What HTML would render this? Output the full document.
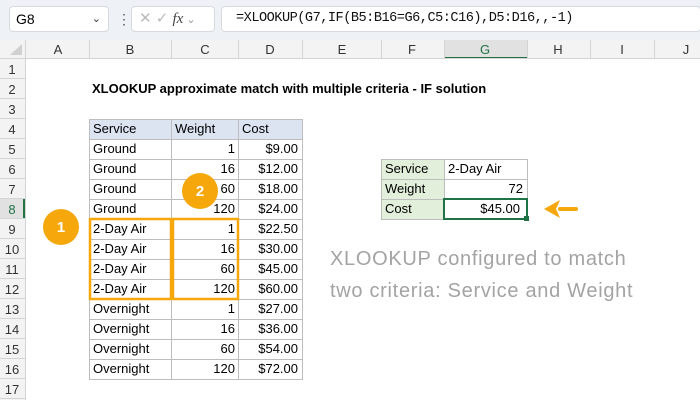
<!DOCTYPE html>
<html><head><style>
*{margin:0;padding:0;box-sizing:border-box}
body{width:700px;height:400px;overflow:hidden;background:#fff;font-family:"Liberation Sans",sans-serif;position:relative}
.a{position:absolute}
.c{position:absolute;font-size:13px;line-height:20px;height:20px;padding:0 4px;color:#000;white-space:nowrap}
.r{text-align:right}
</style></head><body>
<div class="a" style="left:0;top:0;width:700px;height:40px;background:#eef1f5"></div>
<div class="a" style="left:9px;top:6px;width:100px;height:26px;background:#fff;border:1px solid #d6d9dd;border-radius:4px;font-size:14px;line-height:24px;padding-left:6px">G8<span style="position:absolute;right:7px;top:0;font-size:11px;color:#333">&#8964;</span></div>
<div class="a" style="left:117px;top:12px;font-size:14px;color:#555;line-height:14px">&#8942;</div>
<div class="a" style="left:131px;top:6px;width:84px;height:26px;background:#fff;border:1px solid #d6d9dd;border-radius:4px;font-size:15px;line-height:24px;color:#bbb;padding-left:7px">✕ ✓ <i style="font-family:'Liberation Serif',serif;color:#444">fx</i><span style="font-size:11px;color:#999"> &#8964;</span></div>
<div class="a" style="left:221px;top:6px;width:480px;height:26px;background:#fff;border:1px solid #d6d9dd;border-radius:4px;font-family:'Liberation Mono',monospace;font-size:13.6px;line-height:24px;padding-left:14px;color:#111;letter-spacing:-0.5px">=XLOOKUP(G7,IF(B5:B16=G6,C5:C16),D5:D16,,-1)</div>
<svg class="a" style="left:0;top:40px" width="700" height="360">
<rect x="0" y="0" width="700" height="19" fill="#f3f3f3"/>
<rect x="0" y="0" width="25" height="360" fill="#f3f3f3"/>
<rect x="444" y="0" width="83" height="19" fill="#e1e1e1"/>
<rect x="444" y="17" width="83" height="2" fill="#217346"/>
<rect x="0" y="159" width="25" height="20" fill="#e1e1e1"/>
<rect x="23" y="159" width="2" height="20" fill="#217346"/>
<polygon points="10,15 22,15 22,4" fill="#d0d0d0"/>
<g stroke="#d4d4d4" stroke-width="1">
<line x1="0" y1="18.5" x2="700" y2="18.5"/><line x1="25.5" y1="0" x2="25.5" y2="360"/>
<line x1="89.5" y1="0" x2="89.5" y2="19"/><line x1="171.5" y1="0" x2="171.5" y2="19"/><line x1="238.5" y1="0" x2="238.5" y2="19"/><line x1="302.5" y1="0" x2="302.5" y2="19"/><line x1="381.5" y1="0" x2="381.5" y2="19"/><line x1="444.5" y1="0" x2="444.5" y2="19"/><line x1="527.5" y1="0" x2="527.5" y2="19"/><line x1="590.5" y1="0" x2="590.5" y2="19"/><line x1="654.5" y1="0" x2="654.5" y2="19"/>
<line x1="0" y1="38.5" x2="25" y2="38.5"/><line x1="0" y1="58.5" x2="25" y2="58.5"/><line x1="0" y1="78.5" x2="25" y2="78.5"/><line x1="0" y1="98.5" x2="25" y2="98.5"/><line x1="0" y1="118.5" x2="25" y2="118.5"/><line x1="0" y1="138.5" x2="25" y2="138.5"/><line x1="0" y1="158.5" x2="25" y2="158.5"/><line x1="0" y1="178.5" x2="25" y2="178.5"/><line x1="0" y1="198.5" x2="25" y2="198.5"/><line x1="0" y1="218.5" x2="25" y2="218.5"/><line x1="0" y1="238.5" x2="25" y2="238.5"/><line x1="0" y1="258.5" x2="25" y2="258.5"/><line x1="0" y1="278.5" x2="25" y2="278.5"/><line x1="0" y1="298.5" x2="25" y2="298.5"/><line x1="0" y1="318.5" x2="25" y2="318.5"/><line x1="0" y1="338.5" x2="25" y2="338.5"/><line x1="0" y1="358.5" x2="25" y2="358.5"/>
</g>
<g font-family="Liberation Sans" font-size="13" fill="#333" text-anchor="middle">
<text x="58" y="14">A</text><text x="130" y="14">B</text><text x="205" y="14">C</text><text x="270" y="14">D</text><text x="342" y="14">E</text><text x="412" y="14">F</text><text x="485" y="14" fill="#217346">G</text><text x="558" y="14">H</text><text x="622" y="14">I</text><text x="686" y="14">J</text>
<text x="12" y="34">1</text><text x="12" y="54">2</text><text x="12" y="74">3</text><text x="12" y="94">4</text><text x="12" y="114">5</text><text x="12" y="134">6</text><text x="12" y="154">7</text><text x="12" y="174" fill="#217346">8</text><text x="12" y="194">9</text><text x="12" y="214">10</text><text x="12" y="234">11</text><text x="12" y="254">12</text><text x="12" y="274">13</text><text x="12" y="294">14</text><text x="12" y="314">15</text><text x="12" y="334">16</text><text x="12" y="354">17</text>
</g>
<rect x="89" y="79" width="213" height="20" fill="#dce3f1"/>
<g stroke="#bdbdbd" stroke-width="1" fill="none">
<rect x="89.5" y="79.5" width="213" height="260"/>
<line x1="171.5" y1="79" x2="171.5" y2="339"/><line x1="238.5" y1="79" x2="238.5" y2="339"/>
<line x1="89" y1="99.5" x2="302" y2="99.5"/><line x1="89" y1="119.5" x2="302" y2="119.5"/><line x1="89" y1="139.5" x2="302" y2="139.5"/><line x1="89" y1="159.5" x2="302" y2="159.5"/><line x1="89" y1="179.5" x2="302" y2="179.5"/><line x1="89" y1="199.5" x2="302" y2="199.5"/><line x1="89" y1="219.5" x2="302" y2="219.5"/><line x1="89" y1="239.5" x2="302" y2="239.5"/><line x1="89" y1="259.5" x2="302" y2="259.5"/><line x1="89" y1="279.5" x2="302" y2="279.5"/><line x1="89" y1="299.5" x2="302" y2="299.5"/><line x1="89" y1="319.5" x2="302" y2="319.5"/>
</g>
<rect x="381" y="119" width="63" height="60" fill="#e2efda"/>
<g stroke="#bdbdbd" fill="none"><rect x="381.5" y="119.5" width="146" height="60"/><line x1="444.5" y1="119" x2="444.5" y2="179"/><line x1="381" y1="139.5" x2="527" y2="139.5"/><line x1="381" y1="159.5" x2="527" y2="159.5"/></g>
<rect x="444" y="159" width="83" height="20" fill="none" stroke="#217346" stroke-width="2"/>
<rect x="524" y="176" width="5" height="5" fill="#217346"/>
<g stroke="#f5a70c" stroke-width="2.5" fill="none"><rect x="90" y="179" width="81" height="80"/><rect x="173" y="179" width="65" height="80"/></g>
<circle cx="61" cy="187" r="18" fill="#f5a70c"/><circle cx="200" cy="151" r="18" fill="#f5a70c"/>
<g font-family="Liberation Sans" font-weight="bold" font-size="15" fill="#fff" text-anchor="middle"><text x="61" y="192">1</text><text x="200" y="156">2</text></g>
<path d="M560 169 H576" stroke="#f5a70c" stroke-width="4" stroke-linecap="round"/>
<polygon points="544,169 560,160 556,169 560,178" fill="#f5a70c"/>
</svg>
<div class="c" style="left:88px;top:79px;font-weight:bold">XLOOKUP approximate match with multiple criteria - IF solution</div>
<div class="c" style="left:89px;top:119px">Service</div><div class="c" style="left:171px;top:119px">Weight</div><div class="c" style="left:238px;top:119px">Cost</div>
<div class="c" style="left:89px;top:139px">Ground</div><div class="c r" style="left:171px;top:139px;width:68px">1</div><div class="c r" style="left:238px;top:139px;width:64px">$9.00</div>
<div class="c" style="left:89px;top:159px">Ground</div><div class="c r" style="left:171px;top:159px;width:68px">16</div><div class="c r" style="left:238px;top:159px;width:64px">$12.00</div>
<div class="c" style="left:89px;top:179px">Ground</div><div class="c r" style="left:171px;top:179px;width:68px">60</div><div class="c r" style="left:238px;top:179px;width:64px">$18.00</div>
<div class="c" style="left:89px;top:199px">Ground</div><div class="c r" style="left:171px;top:199px;width:68px">120</div><div class="c r" style="left:238px;top:199px;width:64px">$24.00</div>
<div class="c" style="left:89px;top:219px">2-Day Air</div><div class="c r" style="left:171px;top:219px;width:68px">1</div><div class="c r" style="left:238px;top:219px;width:64px">$22.50</div>
<div class="c" style="left:89px;top:239px">2-Day Air</div><div class="c r" style="left:171px;top:239px;width:68px">16</div><div class="c r" style="left:238px;top:239px;width:64px">$30.00</div>
<div class="c" style="left:89px;top:259px">2-Day Air</div><div class="c r" style="left:171px;top:259px;width:68px">60</div><div class="c r" style="left:238px;top:259px;width:64px">$45.00</div>
<div class="c" style="left:89px;top:279px">2-Day Air</div><div class="c r" style="left:171px;top:279px;width:68px">120</div><div class="c r" style="left:238px;top:279px;width:64px">$60.00</div>
<div class="c" style="left:89px;top:299px">Overnight</div><div class="c r" style="left:171px;top:299px;width:68px">1</div><div class="c r" style="left:238px;top:299px;width:64px">$27.00</div>
<div class="c" style="left:89px;top:319px">Overnight</div><div class="c r" style="left:171px;top:319px;width:68px">16</div><div class="c r" style="left:238px;top:319px;width:64px">$36.00</div>
<div class="c" style="left:89px;top:339px">Overnight</div><div class="c r" style="left:171px;top:339px;width:68px">60</div><div class="c r" style="left:238px;top:339px;width:64px">$54.00</div>
<div class="c" style="left:89px;top:359px">Overnight</div><div class="c r" style="left:171px;top:359px;width:68px">120</div><div class="c r" style="left:238px;top:359px;width:64px">$72.00</div>
<div class="c" style="left:381px;top:159px">Service</div><div class="c" style="left:444px;top:159px">2-Day Air</div>
<div class="c" style="left:381px;top:179px">Weight</div><div class="c r" style="left:444px;top:179px;width:83px">72</div>
<div class="c" style="left:381px;top:199px">Cost</div><div class="c r" style="left:444px;top:199px;width:80px">$45.00</div>
<div class="a" style="left:330px;top:243px;font-size:20px;line-height:32px;color:#a3a3a3;letter-spacing:0.7px">XLOOKUP configured to match<br>two criteria: Service and Weight</div>
</body></html>
